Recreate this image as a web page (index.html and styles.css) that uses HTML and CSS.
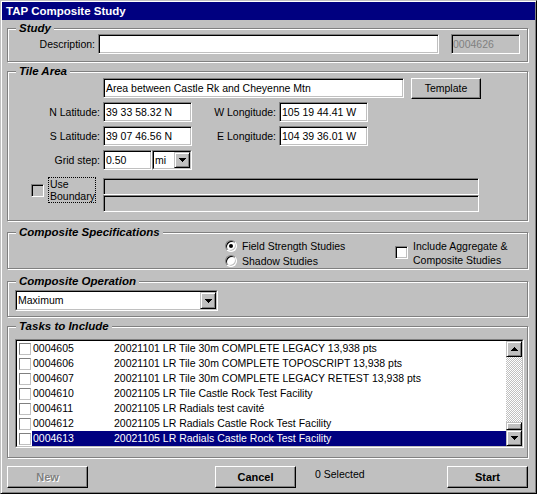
FILE: index.html
```html
<!DOCTYPE html>
<html>
<head>
<meta charset="utf-8">
<title>TAP Composite Study</title>
<link rel="stylesheet" href="styles.css">
</head>
<body>
<div class="win">
  <div class="title">TAP Composite Study</div>
  <div class="content">

    <div class="group g-study">
      <div class="legend">Study</div>
      <div class="study-row">
        <div class="lbl desc-lbl">Description:</div>
        <div class="field desc"></div>
        <div class="field disabled idf">0004626</div>
      </div>
    </div>

    <div class="group g-tile">
      <div class="legend">Tile Area</div>
      <div class="tile">
        <div class="r1">
          <div class="field area">Area between Castle Rk and Cheyenne Mtn</div>
          <div class="btn tmpl">Template</div>
        </div>

        <div class="lbl">N Latitude:</div>
        <div class="field">39 33 58.32 N</div>
        <div class="lbl">W Longitude:</div>
        <div class="field">105 19 44.41 W</div>
        <div></div>

        <div class="lbl">S Latitude:</div>
        <div class="field">39 07 46.56 N</div>
        <div class="lbl">E Longitude:</div>
        <div class="field">104 39 36.01 W</div>
        <div></div>

        <div class="lbl">Grid step:</div>
        <div class="grid-step">
          <div class="field step">0.50</div>
          <div class="combo mi">
            <div class="combo-in">
              <div class="combo-txt">mi</div>
              <div class="dd"><svg width="7" height="4" viewBox="0 0 7 4"><path d="M0 0h7v1h-1v1h-1v1h-1v1h-1v-1h-1v-1h-1v-1h-1z" fill="#000"/></svg></div>
            </div>
          </div>
        </div>
        <div></div><div></div><div></div>

        <div class="bnd-left">
          <div class="chk gray"></div>
          <div class="focus-lbl">Use<br>Boundary</div>
        </div>
        <div class="bnd-panels">
          <div class="bpanel"></div>
          <div class="bpanel"></div>
        </div>
      </div>
    </div>

    <div class="group g-cs">
      <div class="legend">Composite Specifications</div>
      <div class="cs">
        <div class="radios">
          <div class="rrow"><div class="radio on"></div><span>Field Strength Studies</span></div>
          <div class="rrow"><div class="radio"></div><span>Shadow Studies</span></div>
        </div>
        <div class="agg">
          <div class="chk"></div>
          <div class="agg-txt">Include Aggregate &amp;<br>Composite Studies</div>
        </div>
      </div>
    </div>

    <div class="group g-co">
      <div class="legend">Composite Operation</div>
      <div class="co">
        <div class="combo maxc">
          <div class="combo-in">
            <div class="combo-txt">Maximum</div>
            <div class="dd"><svg width="7" height="4" viewBox="0 0 7 4"><path d="M0 0h7v1h-1v1h-1v1h-1v1h-1v-1h-1v-1h-1v-1h-1z" fill="#000"/></svg></div>
          </div>
        </div>
      </div>
    </div>

    <div class="group g-tasks">
      <div class="legend">Tasks to Include</div>
      <div class="tasks">
        <div class="list">
          <div class="list-in">
            <div class="rows">
              <div class="lrow"><div class="lchk"></div><div class="sel"><span class="tid">0004605</span><span>20021101 LR Tile 30m COMPLETE LEGACY 13,938 pts</span></div></div>
              <div class="lrow"><div class="lchk"></div><div class="sel"><span class="tid">0004606</span><span>20021101 LR Tile 30m COMPLETE TOPOSCRIPT 13,938 pts</span></div></div>
              <div class="lrow"><div class="lchk"></div><div class="sel"><span class="tid">0004607</span><span>20021101 LR Tile 30m COMPLETE LEGACY RETEST 13,938 pts</span></div></div>
              <div class="lrow"><div class="lchk"></div><div class="sel"><span class="tid">0004610</span><span>20021105 LR Tile Castle Rock Test Facility</span></div></div>
              <div class="lrow"><div class="lchk"></div><div class="sel"><span class="tid">0004611</span><span>20021105 LR Radials test cavité</span></div></div>
              <div class="lrow"><div class="lchk"></div><div class="sel"><span class="tid">0004612</span><span>20021105 LR Radials Castle Rock Test Facility</span></div></div>
              <div class="lrow"><div class="lchk"></div><div class="sel hi"><span class="tid">0004613</span><span>20021105 LR Radials Castle Rock Test Facility</span></div></div>
            </div>
            <div class="sb">
              <div class="sbbtn"><svg width="7" height="4" viewBox="0 0 7 4"><path d="M3 0h1v1h1v1h1v1h1v1h-7v-1h1v-1h1v-1h1z" fill="#000"/></svg></div>
              <div class="track"></div>
              <div class="thumb"></div>
              <div class="sbbtn"><svg width="7" height="4" viewBox="0 0 7 4"><path d="M0 0h7v1h-1v1h-1v1h-1v1h-1v-1h-1v-1h-1v-1h-1z" fill="#000"/></svg></div>
            </div>
          </div>
        </div>
      </div>
    </div>

    <div class="bottom">
      <div class="btn big disabled-btn">New</div>
      <div class="btn big cancel">Cancel</div>
      <div class="selcount">0 Selected</div>
      <div class="btn big start">Start</div>
    </div>

  </div>
</div>
</body>
</html>
```

FILE: styles.css
```css
* { box-sizing: border-box; }
html, body { margin: 0; padding: 0; background: #c0c0c0; }
body {
  font-family: "Liberation Sans", Arial, sans-serif;
  font-size: 10.5px;
  color: #000;
}

.win {
  width: 537px;
  height: 494px;
  border: 1px solid;
  border-color: #c0c0c0 #000 #000 #c0c0c0;
  box-shadow: inset 1px 1px #fff, inset -1px -1px #808080;
  padding: 1px;
  display: flex;
  flex-direction: column;
}

.title {
  height: 18px;
  background: #000080;
  color: #fff;
  font-weight: bold;
  font-size: 11.5px;
  line-height: 18px;
  padding-left: 4px;
}

.content { padding: 0 7px 0 5px; }

/* group boxes */
.group {
  position: relative;
  border: 1px solid #808080;
  box-shadow: inset 1px 1px #fff, 1px 1px #fff;
}
.legend {
  position: absolute;
  left: 8px;
  top: -8px;
  padding: 0 3px;
  background: #c0c0c0;
  font-weight: bold;
  font-style: italic;
  font-size: 11.5px;
  line-height: 14px;
}
.g-study { margin-top: 8px; height: 34px; }
.g-tile { margin-top: 9px; height: 150px; }
.g-cs { margin-top: 11px; height: 37px; }
.g-co { margin-top: 12px; height: 36px; }
.g-tasks { margin-top: 9px; height: 132px; }

/* generic controls */
.lbl {
  text-align: right;
  line-height: 20px;
  white-space: nowrap;
}
.field {
  background: #fff;
  height: 20px;
  border: 1px solid;
  border-color: #808080 #fff #fff #808080;
  box-shadow: inset 1px 1px #000, inset -1px -1px #c0c0c0;
  padding: 0 2px;
  line-height: 18px;
  white-space: nowrap;
  overflow: hidden;
}
.field.disabled {
  background: #c0c0c0;
  color: #808080;
  padding-left: 1px;
}
.btn {
  background: #c0c0c0;
  border: 1px solid;
  border-color: #fff #000 #000 #fff;
  box-shadow: inset -1px -1px #808080;
  text-align: center;
  white-space: nowrap;
}
.chk {
  width: 13px;
  height: 13px;
  flex: none;
  background: #fff;
  border: 1px solid;
  border-color: #808080 #fff #fff #808080;
  box-shadow: inset 1px 1px #000, inset -1px -1px #c0c0c0;
}
.chk.gray { background: #c0c0c0; }

.combo {
  height: 20px;
  border: 1px solid;
  border-color: #808080 #fff #fff #808080;
}
.combo-in {
  height: 100%;
  display: flex;
  background: #fff;
  border: 1px solid;
  border-color: #000 #c0c0c0 #c0c0c0 #000;
}
.combo-txt {
  flex: 1;
  padding-left: 1px;
  line-height: 16px;
  white-space: nowrap;
  overflow: hidden;
}
.dd, .sbbtn, .thumb {
  background: #c0c0c0;
  border: 1px solid;
  border-color: #c0c0c0 #000 #000 #c0c0c0;
  box-shadow: inset 1px 1px #fff, inset -1px -1px #808080;
}
.dd {
  width: 16px;
  flex: none;
  display: flex;
  align-items: center;
  justify-content: center;
}
.dd svg, .sbbtn svg { display: block; }

/* study */
.study-row {
  display: flex;
  align-items: center;
  padding-top: 5px;
}
.desc-lbl { width: 87px; margin-right: 3px; }
.desc { width: 341px; }
.idf { width: 69px; margin-left: 12px; }

/* tile area */
.tile {
  display: grid;
  grid-template-columns: 92px 89px 81px 89px 1fr;
  grid-template-rows: 20px 20px 20px 20px 38px;
  column-gap: 3px;
  row-gap: 4px;
  padding-top: 6px;
}
.r1 {
  grid-column: 2 / -1;
  display: flex;
  gap: 7px;
  align-items: flex-start;
}
.area { width: 301px; }
.tmpl { width: 70px; height: 21px; line-height: 19px; }
.grid-step { display: flex; }
.step { width: 49px; }
.mi { width: 40px; }

.bnd-left {
  grid-column: 1;
  display: flex;
  align-items: flex-start;
  padding-left: 23px;
  margin-top: 3px;
}
.bnd-left .chk { margin-top: 7px; margin-right: 4px; }
.focus-lbl {
  border: 1px dotted #000;
  width: 48px;
  padding-left: 1px;
  line-height: 12px;
  white-space: nowrap;
}
.bnd-panels {
  grid-column: 2 / -1;
  width: 376px;
  margin-top: 4px;
  display: flex;
  flex-direction: column;
}
.bpanel {
  height: 17px;
  border: 1px solid;
  border-color: #808080 #fff #fff #808080;
  box-shadow: inset 1px 1px #000, inset -1px -1px #c0c0c0;
}

/* composite specifications */
.cs {
  display: flex;
  padding: 5px 0 0 217px;
}
.radios { width: 170px; }
.rrow {
  height: 15px;
  display: flex;
  align-items: center;
  gap: 5px;
  white-space: nowrap;
}
.radio {
  position: relative;
  width: 12px;
  height: 12px;
  flex: none;
  border-radius: 50%;
  background: #fff;
  border: 1px solid;
  border-color: #808080 #fff #fff #808080;
  box-shadow: inset 1px 1px #000, inset -1px -1px #c0c0c0;
}
.radio.on::after {
  content: "";
  position: absolute;
  left: 3px;
  top: 3px;
  width: 4px;
  height: 4px;
  border-radius: 50%;
  background: #000;
}
.agg {
  display: flex;
  align-items: center;
  gap: 5px;
  margin-top: -1px;
}
.agg-txt { line-height: 14px; white-space: nowrap; }

/* composite operation */
.co { padding: 8px 0 0 7px; }
.maxc { width: 203px; height: 21px; }

/* tasks */
.tasks { padding: 12px 0 0 7px; }
.list {
  width: 509px;
  height: 109px;
  border: 1px solid;
  border-color: #808080 #fff #fff #808080;
}
.list-in {
  height: 100%;
  display: flex;
  background: #fff;
  border: 1px solid;
  border-color: #000 #c0c0c0 #c0c0c0 #000;
}
.rows { flex: 1; }
.lrow {
  height: 15px;
  display: flex;
  align-items: center;
}
.lchk {
  width: 12px;
  height: 12px;
  margin-left: 2px;
  flex: none;
  background: #fff;
  border: 1px solid;
  border-color: #808080 #c0c0c0 #c0c0c0 #808080;
}
.sel {
  flex: 1;
  height: 15px;
  margin-left: 1px;
  padding-left: 1px;
  line-height: 15px;
  white-space: nowrap;
  display: flex;
}
.sel.hi { background: #000080; color: #fff; }
.tid { width: 81px; flex: none; }

.sb {
  width: 16px;
  flex: none;
  display: flex;
  flex-direction: column;
  background-image: conic-gradient(#fff 25%, #c0c0c0 0 50%, #fff 0 75%, #c0c0c0 0);
  background-size: 2px 2px;
}
.sbbtn {
  height: 16px;
  flex: none;
  display: flex;
  align-items: center;
  justify-content: center;
}
.track { flex: 1; }
.thumb { height: 8px; flex: none; }

/* bottom buttons */
.bottom {
  margin-top: 8px;
  height: 22px;
  display: flex;
  align-items: flex-start;
}
.big {
  width: 81px;
  height: 22px;
  line-height: 20px;
  font-weight: bold;
  font-size: 11px;
}
.disabled-btn { color: #808080; text-shadow: 1px 1px #fff; }
.cancel { margin-left: 127px; }
.selcount { margin-left: 19px; margin-top: 1px; line-height: 14px; white-space: nowrap; }
.start { margin-left: auto; }
```
